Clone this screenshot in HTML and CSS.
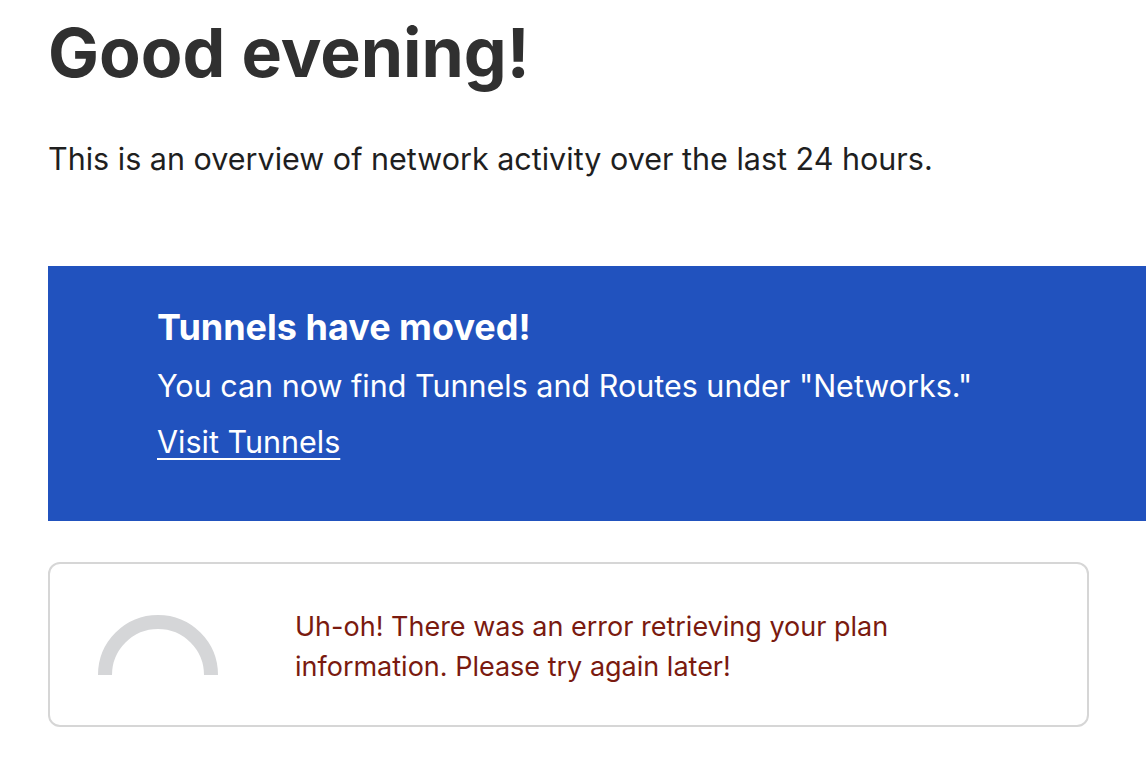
FILE: index.html
```html
<!DOCTYPE html>
<html lang="en">
<head>
<meta charset="utf-8">
<title>Overview</title>
<link rel="stylesheet" href="styles.css">
</head>
<body>
<main class="page">
  <h1 class="title">Good evening!</h1>
  <p class="intro">This is an overview of network activity over the last 24 hours.</p>
  <section class="banner">
    <h2 class="banner-title">Tunnels have moved!</h2>
    <p class="banner-text">You can now find Tunnels and Routes under "Networks."</p>
    <a class="banner-link" href="#">Visit Tunnels</a>
  </section>
  <section class="card">
    <div class="spinner">
      <svg width="120" height="60" viewBox="0 0 120 60">
        <path d="M7 60 A53 53 0 0 1 113 60" fill="none" stroke="#d5d6d8" stroke-width="14"/>
      </svg>
    </div>
    <p class="error">Uh-oh! There was an error retrieving your plan information. Please try again later!</p>
  </section>
</main>
</body>
</html>
```
FILE: styles.css
```css
html, body {
  margin: 0;
  padding: 0;
  background: #fff;
  overflow: hidden;
}
body {
  font-family: Inter, "Noto Sans", sans-serif;
  color: #1f1f1f;
}
.page {
  padding: 10px 57px 0 48px;
  display: flex;
  flex-direction: column;
}
.title {
  margin: 0;
  font-size: 68px;
  font-weight: 700;
  line-height: 84px;
  color: #303030;
}
.intro {
  margin: 45px 0 0;
  font-size: 30.5px;
  line-height: 40px;
  color: #1f1f1f;
}
.banner {
  margin: 87px -57px 0 0;
  background: #2152be;
  color: #fff;
  padding: 39px 40px 59px 109px;
  display: flex;
  flex-direction: column;
}
.banner-title {
  margin: 0;
  font-size: 36px;
  font-weight: 700;
  line-height: 44px;
}
.banner-text {
  margin: 17px 0 0;
  font-size: 30.5px;
  line-height: 40px;
}
.banner-link {
  margin-top: 16px;
  font-size: 30.5px;
  line-height: 40px;
  color: #fff;
  text-decoration: underline;
  text-underline-offset: 5px;
  text-decoration-thickness: 2px;
  align-self: flex-start;
}
.card {
  margin-top: 41px;
  border: 2px solid #d6d6d6;
  border-radius: 12px;
  height: 165px;
  box-sizing: border-box;
  display: flex;
  align-items: flex-start;
  padding: 0 0 0 48px;
}
.spinner {
  width: 120px;
  height: 60px;
  margin-top: 51px;
  display: flex;
}
.error {
  margin: 43px 0 0 77px;
  width: 620px;
  font-size: 27px;
  line-height: 40px;
  color: #7a1a0f;
}
```
